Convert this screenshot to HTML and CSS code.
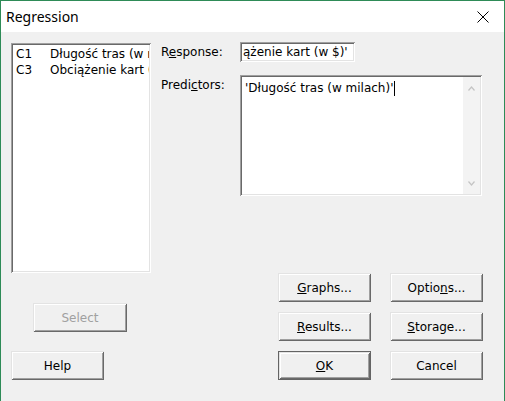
FILE: index.html
```html
<!DOCTYPE html>
<html lang="pl">
<head>
	<meta charset="UTF-8">
	<title>Regression</title>
	<link rel="stylesheet" href="styles.css">
</head>
<body>

<div class="window">
	<div class="titlebar">
		<span class="title">Regression</span>
		<span class="close">
			<svg width="12" height="12" viewBox="0 0 12 12"><path d="M0.5 0.5 L11.5 11.5 M11.5 0.5 L0.5 11.5" stroke="#000" stroke-width="1" fill="none"/></svg>
		</span>
	</div>

	<div class="content">
		<div class="left">
			<div class="listbox sunken">
				<div class="item"><span class="col">C1</span><span class="name">Długość tras (w milach)</span></div>
				<div class="item"><span class="col">C3</span><span class="name">Obciążenie kart (w $)</span></div>
			</div>
			<button class="btn select" disabled>Select</button>
			<button class="btn help">Help</button>
		</div>

		<div class="right">
			<div class="field">
				<label class="label">R<u>e</u>sponse:</label>
				<!-- field is scrolled to its end, so only the tail shows -->
				<div class="edit sunken">ążenie kart (w $)'</div>
			</div>
			<div class="field predictors">
				<label class="label">Predi<u>c</u>tors:</label>
				<div class="memo sunken">
					<div class="memo-text">'Długość tras (w milach)'<span class="caret"></span></div>
					<div class="scrollbar">
						<svg width="7" height="5" viewBox="0 0 7 5"><path d="M0.5 4.5 L3.5 1 L6.5 4.5" stroke="#c4c4c4" stroke-width="1.2" fill="none"/></svg>
						<svg width="7" height="5" viewBox="0 0 7 5"><path d="M0.5 0.5 L3.5 4 L6.5 0.5" stroke="#c4c4c4" stroke-width="1.2" fill="none"/></svg>
					</div>
				</div>
			</div>

			<div class="buttons">
				<button class="btn"><u>G</u>raphs...</button>
				<button class="btn">Optio<u>n</u>s...</button>
				<button class="btn"><u>R</u>esults...</button>
				<button class="btn"><u>S</u>torage...</button>
				<button class="btn default"><u>O</u>K</button>
				<button class="btn">Cancel</button>
			</div>
		</div>
	</div>
</div>

</body>
</html>
```

FILE: styles.css
```css
body {
	margin: 0;
	font-family: 'DejaVu Sans', Tahoma, sans-serif;
	font-size: 12px;
	color: black;
}

.window {
	box-sizing: border-box;
	width: 505px;
	height: 401px;
	border: 1px solid #2e8b57;
	border-bottom: none;
	background: #f0f0f0;
	overflow: hidden;
}

.titlebar {
	display: flex;
	align-items: center;
	justify-content: space-between;
	height: 31px;
	background: white;
}

.title {
	font-family: 'Noto Sans', sans-serif;
	font-size: 14px;
	padding-left: 5px;
}

.close {
	display: flex;
	align-items: center;
	justify-content: center;
	width: 42px;
	height: 31px;
}

.content {
	display: flex;
	gap: 10px;
	padding: 11px 0 0 10px;
}

/* sunken 3d edge, like an old win32 control */
.sunken {
	box-sizing: border-box;
	padding: 2px;
	background: white;
	box-shadow: inset 1px 1px #a0a0a0, inset -1px -1px #fff, inset 2px 2px #696969, inset -2px -2px #e3e3e3;
}

.left {
	display: flex;
	flex-direction: column;
	align-items: flex-start;
	width: 140px;
}

.listbox {
	width: 140px;
	height: 230px;
	padding: 3px 2px 2px 5px;
}

.item {
	display: flex;
	line-height: 16px;
}

.item .col {
	flex: none;
	width: 34px;
}

.item .name {
	flex: 1;
	min-width: 0;
	white-space: nowrap;
	overflow: hidden;
}

.btn {
	box-sizing: border-box;
	width: 93px;
	height: 29px;
	padding: 0;
	border: none;
	background: #f0f0f0;
	font: inherit;
	color: black;
	box-shadow: inset 1px 1px #e3e3e3, inset -1px -1px #696969, inset 2px 2px #fff, inset -2px -2px #a0a0a0;
}

.btn.default {
	border: 1px solid #646464;
}

.btn.select {
	width: 94px;
	margin: 30px 0 0 22px;
	color: #a0a0a0;
}

.btn.help {
	margin-top: 19px;
}

.right {
	display: flex;
	flex-direction: column;
	width: 322px;
	margin-top: -1px;
}

.field {
	display: flex;
	align-items: center;
}

.field.predictors {
	align-items: flex-start;
	margin-top: 13px;
}

.label {
	width: 79px;
	line-height: 15px;
}

.predictors .label {
	padding-top: 3px;
}

.edit {
	width: 115px;
	height: 20px;
	padding: 2px 2px 2px 3px;
	line-height: 16px;
	white-space: nowrap;
	overflow: hidden;
}

.memo {
	display: flex;
	width: 242px;
	height: 121px;
}

.memo-text {
	flex: 1;
	padding: 4px 3px;
	line-height: 15px;
	white-space: nowrap;
}

.caret {
	display: inline-block;
	width: 1px;
	height: 15px;
	margin-left: 1px;
	background: black;
	vertical-align: top;
}

.scrollbar {
	display: flex;
	flex-direction: column;
	align-items: center;
	justify-content: space-between;
	width: 17px;
	padding: 9px 0 8px;
	box-sizing: border-box;
	background: #f3f3f3;
}

.buttons {
	display: grid;
	grid-template-columns: 93px 93px;
	column-gap: 19px;
	row-gap: 10px;
	align-self: flex-end;
	margin-top: 77px;
}
```
